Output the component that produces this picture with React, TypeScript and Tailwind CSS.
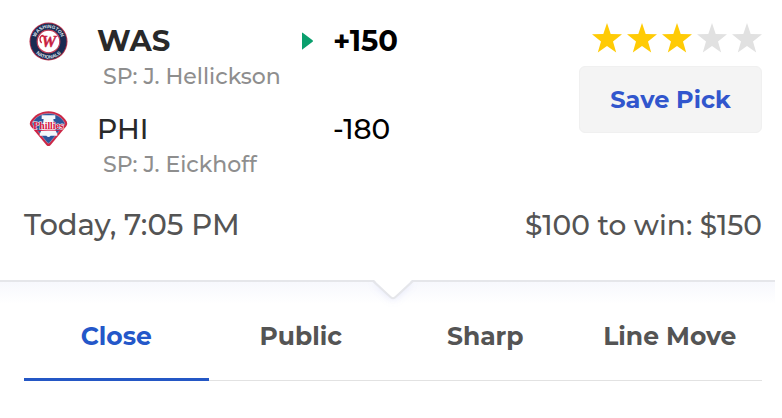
const STAR =
  "M15.5 0 L19.3 11 L31 11.3 L21.7 18.4 L25 29.5 L15.5 23 L6 29.5 L9.3 18.4 L0 11.3 L11.7 11 Z";

function NationalsLogo() {
  return (
    <svg viewBox="0 0 40 40" className="size-[39px]" role="img" aria-label="Washington Nationals">
      <defs>
        <path id="nats-top" d="M6.2 20 A13.8 13.8 0 0 1 33.8 20" />
        <path id="nats-bottom" d="M2.4 20 A17.6 17.6 0 0 0 37.6 20" />
      </defs>
      <circle cx="20" cy="20" r="19.5" fill="#b8334c" />
      <circle cx="20" cy="20" r="18.5" fill="#1b2b52" />
      <circle cx="20" cy="20" r="11.6" fill="#fff" stroke="#c13f58" strokeWidth="1.2" />
      <g fill="#dfe3ee" className="font-['Liberation_Sans'] text-[5px] font-bold" textAnchor="middle">
        <text>
          <textPath href="#nats-top" startOffset="50%">WASHINGTON</textPath>
        </text>
        <text>
          <textPath href="#nats-bottom" startOffset="50%">NATIONALS</textPath>
        </text>
      </g>
      <text
        x="20.5"
        y="26"
        textAnchor="middle"
        fill="#c8203f"
        stroke="#c8203f"
        strokeWidth="0.4"
        className="font-['Liberation_Serif'] text-[17px] font-bold italic"
      >
        W
      </text>
      <path
        d="M12.6 21 C10.4 18.6 11 14 14.4 13.8"
        fill="none"
        stroke="#c8203f"
        strokeWidth="1.4"
        strokeLinecap="round"
      />
    </svg>
  );
}

function PhilliesLogo() {
  return (
    <svg viewBox="0 0 40 38" className="h-[38px] w-[39px]" role="img" aria-label="Philadelphia Phillies">
      <path
        d="M20 .8 C28 .8 35 5 38.8 11.6 Q39.8 14 38.4 16 L22 35.6 Q20 37.4 18 35.6 L1.6 16 Q.2 14 1.2 11.6 C5 5 12 .8 20 .8 Z"
        fill="#cc2746"
      />
      <path
        d="M20 3.1 C27.5 3.1 33.2 6.6 36.4 12.4 Q37 13.8 36.2 14.8 L21.2 33 Q20 34.2 18.8 33 L3.8 14.8 Q3 13.8 3.6 12.4 C6.8 6.6 12.5 3.1 20 3.1 Z"
        fill="#2a569c"
        stroke="#d9d3e2"
        strokeWidth=".4"
      />
      <path
        d="M13 4.8 H27 V8.8 H25 C25.6 15 26.4 19.5 29 24.2 V26 H22.2 Q20 28.6 17.8 26 H11 V24.2 C13.6 19.5 14.4 15 15 8.8 H13 Z"
        fill="#f3f7fb"
      />
      <text
        x="20"
        y="19.2"
        textAnchor="middle"
        fill="#d5123d"
        stroke="#fff"
        strokeWidth="0.9"
        paintOrder="stroke"
        className="font-['Liberation_Serif'] text-[10px] font-bold"
      >
        Phillies
      </text>
      <path d="M6 20.8 Q20 19.8 32 20.4" fill="none" stroke="#d5123d" strokeWidth=".9" />
    </svg>
  );
}

const teams = [
  { code: "WAS", pitcher: "SP: J. Hellickson", odds: "+150", picked: true, Logo: NationalsLogo },
  { code: "PHI", pitcher: "SP: J. Eickhoff", odds: "-180", picked: false, Logo: PhilliesLogo },
];

const tabs = ["Close", "Public", "Sharp", "Line Move"];

export default function App() {
  return (
    <main className="bg-white pr-[7px] font-[Montserrat,Inter,'Open_Sans',sans-serif] font-medium text-[#545454]">
      <section className="pt-[23px] pr-[13px] pb-[37px] pl-6">
        <div className="flex justify-between">
          <ul className="flex flex-col gap-4">
            {teams.map(({ code, pitcher, odds, picked, Logo }) => (
              <li key={code} className="grid grid-cols-[73px_204px_32px_auto] leading-9">
                <div className="flex h-9 items-center pl-[5px]">
                  <Logo />
                </div>
                <div>
                  <div className={picked ? "text-[29px] font-bold leading-9 text-[#292929]" : "text-[28px] leading-9 text-[#292929]"}>
                    {code}
                  </div>
                  <div className="pl-[6px] text-[22px] leading-9 text-[#8e8e8e]">{pitcher}</div>
                </div>
                <div className="flex h-9 items-center">
                  {picked && (
                    <svg viewBox="0 0 12 18" className="h-[18px] w-3" role="img" aria-label="Selected">
                      <path d="M1 1 Q1 0 2 1 L11.6 8.2 Q12.3 9 11.6 9.8 L2 17 Q1 18 1 17 Z" fill="#0a9f6d" />
                    </svg>
                  )}
                </div>
                <div className={picked ? "text-[29px] font-bold leading-9 text-black" : "text-[28px] leading-9 text-black"}>
                  {odds}
                </div>
              </li>
            ))}
          </ul>
          <div className="flex flex-col items-end gap-[13px]">
            <div className="flex gap-[5px]" role="img" aria-label="3 out of 5 stars">
              {[1, 2, 3, 4, 5].map((n) => (
                <svg key={n} viewBox="0 0 31 30" preserveAspectRatio="none" className="h-[30px] w-[30px]" aria-hidden="true">
                  <path d={STAR} fill={n <= 3 ? "#ffcb05" : "#e1e1e1"} />
                </svg>
              ))}
            </div>
            <button
              type="button"
              className="h-[67px] w-[183px] rounded-md border border-[#f0f0f0] bg-[#f4f4f4] text-[24px] font-bold text-[#3156cd]"
            >
              Save Pick
            </button>
          </div>
        </div>
        <div className="mt-6 flex justify-between leading-9">
          <p className="text-[29px] leading-9">Today, 7:05 PM</p>
          <p className="text-[28px] leading-9">$100 to win: $150</p>
        </div>
      </section>

      <section className="relative border-t-2 border-[#e5e6ea] bg-linear-to-b from-[#f7f8fd] to-white to-[22px] pt-[11px] pr-[13px] pl-6">
        <div className="absolute inset-x-0 -top-[2px] flex justify-center pr-[13px] pl-6">
          <svg viewBox="0 0 60 32" className="h-8 w-[60px]" aria-hidden="true">
            <path
              d="M11 0 L28 17 Q30 19 32 17 L49 0 Z"
              fill="#fff"
              className="drop-shadow-[0_2px_4px_rgba(80,90,220,0.14)]"
            />
            <path d="M0 1 H10 L28 17.4 Q30 19 32 17.4 L50 1 H60" fill="none" stroke="#e5e6ea" strokeWidth="2" />
          </svg>
        </div>
        <div role="tablist" className="grid grid-cols-4 border-b border-[#e2e2e2]">
          {tabs.map((tab, i) => (
            <button
              key={tab}
              type="button"
              role="tab"
              aria-selected={i === 0}
              className={
                i === 0
                  ? "-mb-px h-[88px] border-b-3 border-[#2457c5] pt-[2px] text-[25px] font-bold text-[#2457c9]"
                  : "-mb-px h-[88px] border-b-3 border-transparent pt-[2px] text-[25px] font-bold"
              }
            >
              {tab}
            </button>
          ))}
        </div>
      </section>
    </main>
  );
}
